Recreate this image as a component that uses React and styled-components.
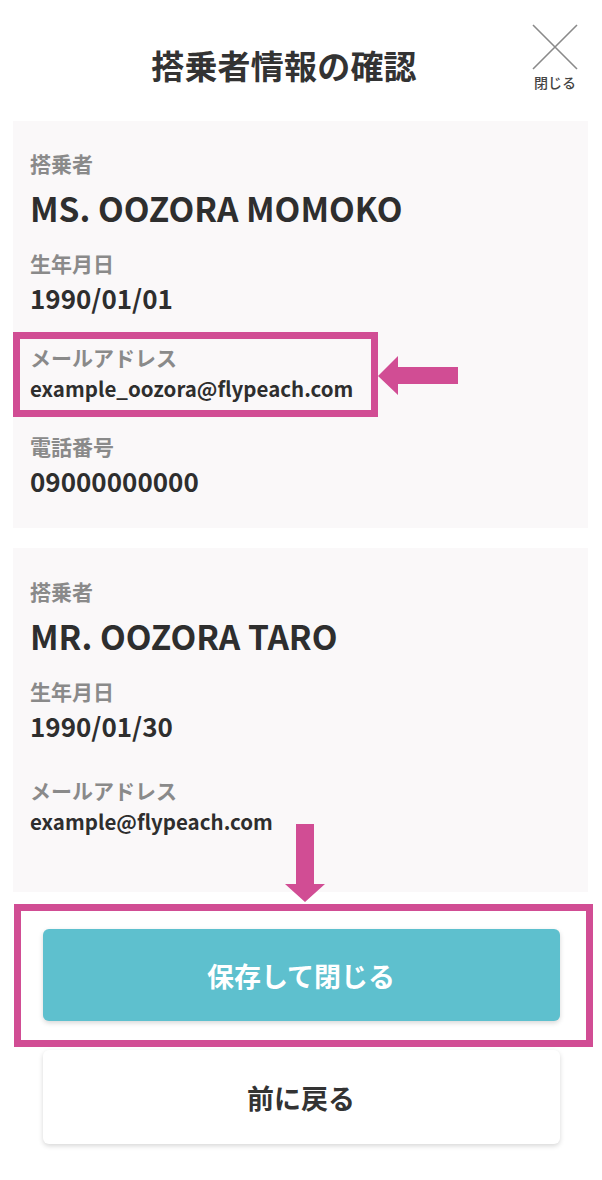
import styled, { createGlobalStyle } from "styled-components";

const GlobalStyle = createGlobalStyle`
  html, body {
    margin: 0;
    padding: 0;
    background: #ffffff;
  }
  body {
    font-family: "Noto Sans CJK JP", "Noto Sans", sans-serif;
    color: #333333;
  }
`;

const PINK = "#d14d94";

const Page = styled.div`
  width: 602px;
  min-height: 1180px;
  background: #ffffff;
  padding-bottom: 38px;
  box-sizing: border-box;
`;

const Header = styled.header`
  position: relative;
  height: 121px;
  display: flex;
  align-items: center;
  justify-content: center;
  padding-right: 34px;
  padding-top: 8px;
  box-sizing: border-box;
`;

const Title = styled.h1`
  margin: 0;
  font-size: 33px;
  line-height: 44px;
  font-weight: 700;
  color: #333333;
  letter-spacing: 0.2px;
`;

const CloseButton = styled.button`
  position: absolute;
  top: 24px;
  right: 24px;
  display: flex;
  flex-direction: column;
  align-items: center;
  gap: 3px;
  padding: 0;
  border: none;
  background: none;
  cursor: pointer;
  font-family: inherit;
  font-size: 14px;
  line-height: 18px;
  color: #444444;
  font-weight: 500;
`;

const Card = styled.section`
  margin: 0 14px 0 13px;
  padding: ${(p) => (p.$tall ? "29px 17px 57px" : "28px 17px 29px")};
  background: #faf8f9;
  & + & {
    margin-top: 20px;
  }
`;

const Label = styled.div`
  font-size: 21px;
  line-height: 28px;
  font-weight: 700;
  color: #8a8a8a;
`;

const Name = styled.div`
  margin-top: 11px;
  font-size: 33.5px;
  line-height: 40px;
  font-weight: 700;
  color: #2e2e2e;
`;

const Field = styled.div`
  position: relative;
  margin-top: ${(p) => p.$gap || 28}px;
`;

const Value = styled.div`
  margin-top: 3px;
  font-size: ${(p) => (p.$small ? 20.5 : 26)}px;
  line-height: ${(p) => (p.$small ? 28 : 36)}px;
  font-weight: 700;
  color: #2e2e2e;
`;

const Highlight = styled.div`
  position: absolute;
  left: -17px;
  top: -11px;
  width: 365px;
  height: 85px;
  border: 7px solid ${PINK};
  box-sizing: border-box;
  pointer-events: none;
`;

const SideArrow = styled.svg`
  position: absolute;
  left: 335px;
  top: 13px;
`;

const Actions = styled.div`
  margin: 37px auto 0;
  width: 517px;
  display: flex;
  flex-direction: column;
  gap: 29px;
`;

const Framed = styled.div`
  position: relative;
`;

const Frame = styled.div`
  position: absolute;
  left: -29px;
  right: -33px;
  top: -25px;
  bottom: -26px;
  border: 7px solid ${PINK};
  pointer-events: none;
`;

const DownArrow = styled.svg`
  position: absolute;
  left: 242px;
  top: -105px;
`;

const Button = styled.button`
  display: block;
  width: 100%;
  height: ${(p) => (p.$primary ? 92 : 94)}px;
  border: none;
  border-radius: 6px;
  background: ${(p) => (p.$primary ? "#5ec0ce" : "#ffffff")};
  color: ${(p) => (p.$primary ? "#ffffff" : "#333333")};
  font-family: inherit;
  font-size: 27px;
  font-weight: 700;
  box-shadow: 0 2px 5px rgba(0, 0, 0, 0.16);
  cursor: pointer;
`;

const passengers = [
  {
    name: "MS. OOZORA MOMOKO",
    birth: "1990/01/01",
    email: "example_oozora@flypeach.com",
    phone: "09000000000",
    marked: true,
  },
  {
    name: "MR. OOZORA TARO",
    birth: "1990/01/30",
    email: "example@flypeach.com",
  },
];

const PassengerCard = ({ p }) => (
  <Card $tall={!p.phone}>
    <Label>搭乗者</Label>
    <Name>{p.name}</Name>
    <Field $gap={21}>
      <Label>生年月日</Label>
      <Value>{p.birth}</Value>
    </Field>
    <Field $gap={p.marked ? 27 : 32}>
      {p.marked && (
        <>
          <Highlight />
          <SideArrow width="94" height="40" viewBox="0 0 94 40">
            <polygon
              points="13,20 33,0 33,11 93,11 93,28 33,28 33,39"
              fill={PINK}
            />
          </SideArrow>
        </>
      )}
      <Label>メールアドレス</Label>
      <Value $small>{p.email}</Value>
    </Field>
    {p.phone && (
      <Field $gap={30}>
        <Label>電話番号</Label>
        <Value>{p.phone}</Value>
      </Field>
    )}
  </Card>
);

export default function App() {
  return (
    <Page>
      <GlobalStyle />
      <Header>
        <Title>搭乗者情報の確認</Title>
        <CloseButton>
          <svg width="46" height="46" viewBox="0 0 46 46">
            <path d="M1 1 L45 45 M45 1 L1 45" stroke="#8a8a8a" strokeWidth="1.6" />
          </svg>
          閉じる
        </CloseButton>
      </Header>
      {passengers.map((p) => (
        <PassengerCard key={p.name} p={p} />
      ))}
      <Actions>
        <Framed>
          <Frame />
          <DownArrow width="40" height="78" viewBox="0 0 40 78">
            <polygon points="11,0 29,0 29,60 40,60 20,78 0,60 11,60" fill={PINK} />
          </DownArrow>
          <Button $primary>保存して閉じる</Button>
        </Framed>
        <Button>前に戻る</Button>
      </Actions>
    </Page>
  );
}
